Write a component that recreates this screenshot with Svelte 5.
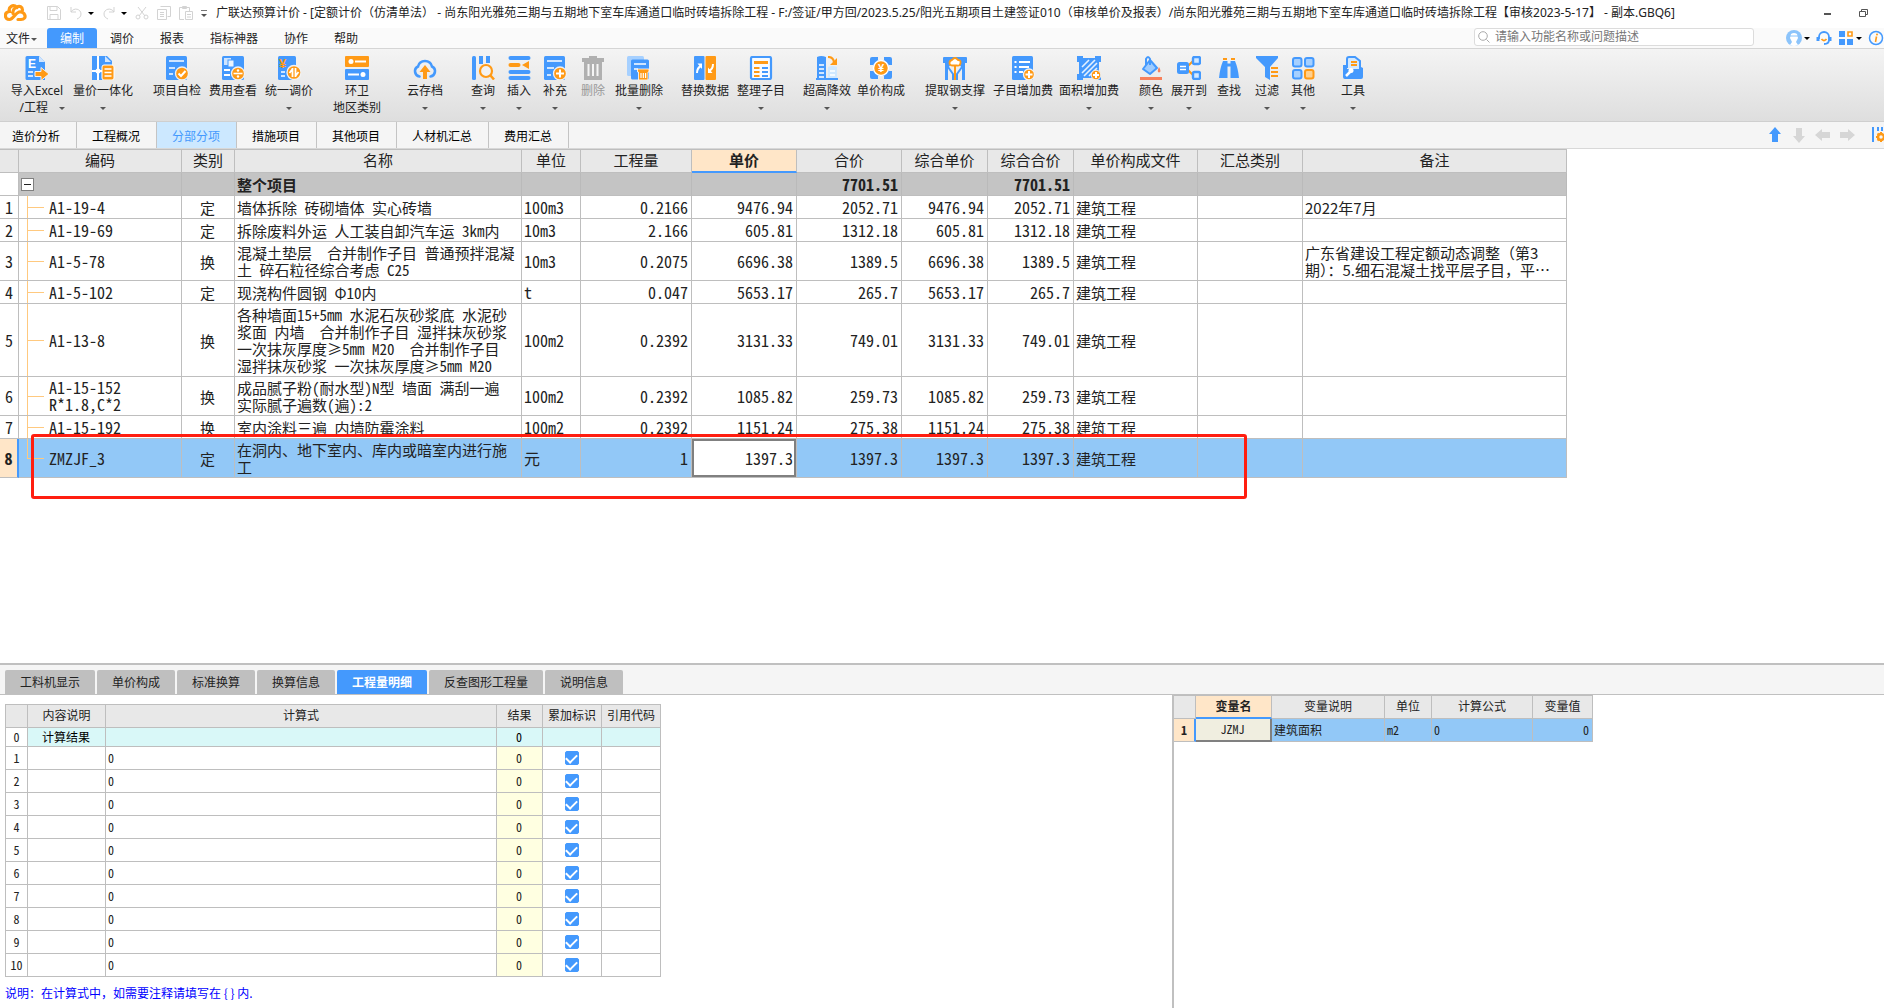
<script>
  const B = '#4499fd';
  const O = '#ff9a16';

  // 24x24 toolbar artwork
  const icons = {
    excel: `<path fill="${B}" d="M2 0h12l6 6v18H2a1.500 1.500 0 0 1-1.500-1.500v-21A1.500 1.500 0 0 1 2 0z"/><path fill="#cfe5ff" d="M14 0l6 6h-6z"/><text x="3" y="12" font-size="12" font-weight="bold" font-family="Liberation Sans" fill="#fff">E</text><path stroke="#cfe5ff" stroke-width="2" d="M3 16h5M3 20h5"/><path fill="${O}" stroke="#f2f2f2" stroke-width="1" d="M10 15.500h6V11.500l8 6.500-8 6.500v-4h-6z"/>`,
    quantity: `<path fill="${B}" d="M1 0h15l5 5v19H1z"/><path fill="#cfe5ff" d="M14 0l6 6h-6z"/><path stroke="#fff" stroke-width="2" d="M7 0v24M1 15h12"/><circle cx="7" cy="15" r="2.500" fill="#fff"/><rect x="11" y="9" width="12" height="15" rx="2" fill="${O}" stroke="#fff"/><path stroke="#fff" stroke-width="1.500" d="M13.500 13h7M13.500 16.500h7M13.500 20h7"/>`,
    check: `<rect x="1" width="21" height="24" rx="1.500" fill="${B}"/><path stroke="#cfe5ff" stroke-width="2" d="M4 5h15M4 12h6M4 18h4"/><circle cx="17" cy="17.500" r="6.500" fill="${O}" stroke="#f2f2f2" stroke-width="1.300"/><path fill="none" stroke="#fff" stroke-width="2" d="M13.500 17.500l2.500 2.500 4.500-5"/>`,
    fee: `<rect x="1" width="22" height="24" rx="1.500" fill="${B}"/><rect x="3" y="2" width="7" height="7" fill="#cfe5ff"/><rect x="7" y="4" width="6" height="7" fill="#e9f4ff" stroke="${B}"/><path stroke="#fff" stroke-width="2" d="M3 14h6M3 19h6"/><circle cx="17" cy="17.500" r="6.500" fill="${O}" stroke="#f2f2f2" stroke-width="1.300"/><path stroke="#fff" stroke-width="1.600" d="M12.500 17.500h9"/><circle cx="17" cy="14.500" r="1.200" fill="#fff"/><circle cx="17" cy="20.500" r="1.200" fill="#fff"/>`,
    adjust: `<rect x="1" width="18" height="24" rx="1.500" fill="${B}"/><text x="2" y="12" font-size="13" font-weight="bold" font-family="Liberation Sans" fill="${O}">¥</text><path stroke="#cfe5ff" stroke-width="2" d="M4 16h4M4 20h4"/><circle cx="17" cy="16.500" r="7" fill="${O}" stroke="#f2f2f2" stroke-width="1.300"/><path fill="none" stroke="#fff" stroke-width="1.800" d="M15.500 12v9M12.500 17l3-4M18.500 21v-9M21.500 16l-3 4"/>`,
    region: `<rect width="24" height="11" rx="1" fill="${O}"/><rect y="13" width="24" height="11" rx="1" fill="${B}"/><circle cx="6" cy="5.500" r="2.500" fill="#fff"/><path stroke="#fff" stroke-width="2" d="M10 5.500h11M3 18.500h11"/><circle cx="18" cy="18.500" r="2.500" fill="#fff"/>`,
    cloud: `<path fill="none" stroke="${B}" stroke-width="2.600" stroke-linecap="round" d="M6.500 20.500A5.300 5.300 0 0 1 5 10.500a7.200 7.200 0 0 1 14 0 5.300 5.300 0 0 1-1.500 10"/><path fill="${O}" d="M12 9l5.500 7H14v7h-4v-7H6.500z"/>`,
    query: `<rect x="1" width="4" height="24" rx="1.500" fill="${B}"/><path stroke="${B}" stroke-width="4" d="M10 0v8M17 0v7"/><circle cx="15" cy="15" r="6" fill="#f2f2f2" stroke="${O}" stroke-width="2.200"/><path stroke="${O}" stroke-width="2.500" d="M19.500 19.500l3.500 4"/>`,
    insert: `<g stroke-width="4" stroke-linecap="round"><path stroke="${B}" d="M3.500 2h18M3.500 16h18M3.500 22h18"/><path stroke="${O}" d="M3.500 9h8"/></g><path fill="${O}" d="M22 5v8l-7-4z"/>`,
    add: `<rect x="1" width="21" height="24" rx="1.500" fill="${B}"/><path stroke="#cfe5ff" stroke-width="1.800" d="M4 5h15M4 12h7M4 19h4"/><circle cx="17" cy="17.500" r="6.500" fill="${O}" stroke="#f2f2f2" stroke-width="1.300"/><path stroke="#fff" stroke-width="2" d="M17 13.500v8M13 17.500h8"/>`,
    trash: `<path fill="#b0b0b0" d="M8 0h8v2h7v4h-2v18H3V6H1V2h7z"/><path stroke="#f5f5f5" stroke-width="2" d="M7.500 8v12M12 8v12M16.500 8v12"/>`,
    batch: `<rect width="17" height="20" rx="1.500" fill="#a6d0ff"/><rect x="4" y="3.500" width="18" height="20" rx="1.500" fill="${B}"/><path stroke="#cfe5ff" stroke-width="1.800" d="M7 8h12M7 13h4"/><path fill="${O}" stroke="#fff" stroke-width=".8" d="M10.500 13h11.500v3h-1v8h-9.500v-8h-1z"/><path stroke="#fff" stroke-width="1.200" d="M14 17v5M16.300 17v5M18.600 17v5"/>`,
    replace: `<rect x="1" width="10.500" height="24" rx="1" fill="${B}"/><rect x="12.500" width="10.500" height="24" rx="1" fill="${O}"/><path fill="none" stroke="#fff" stroke-width="2" d="M4 17q0-5 4-7M20 8q0 5-4 7"/><path fill="#fff" d="M4.500 7.500H9V13zM19.500 17H15v-5.500z"/>`,
    arrange: `<rect x="2" y="1" width="20" height="22" rx="1.500" fill="#f8fbff" stroke="${B}" stroke-width="2.200"/><path stroke="${O}" stroke-width="3" d="M5 6.500h14"/><path stroke="${O}" stroke-width="2" d="M5 12h5.500M5 16h5.500M5 20h5.500"/><path stroke="${B}" stroke-width="2" d="M13 12h6M13 16h6M13 20h6"/>`,
    high: `<path fill="${B}" d="M2 1q4-2 9 0v21h12v2H1v-2h1z"/><path stroke="#fff" stroke-width="1.500" d="M4 9h5M4 13h5M4 17h5M4 21h5"/><path fill="#cfe8ff" d="M13 11q4-2 9 0v11h-9z"/><path stroke="#fff" stroke-width="1.300" d="M15 15h5M15 19h5"/><path fill="none" stroke="${O}" stroke-width="2.200" d="M13 1q5 0 6 5"/><path fill="${O}" d="M22 2v7h-7z"/>`,
    price: `<path fill="${B}" d="M3 1h6v3h6V1h6a2 2 0 0 1 2 2v6h-3v6h3v6a2 2 0 0 1-2 2h-6v-3H9v3H3a2 2 0 0 1-2-2v-6h3V9H1V3a2 2 0 0 1 2-2z"/><circle cx="12" cy="12" r="7.500" fill="${O}" stroke="#fff" stroke-width="1.500"/><text x="12" y="16" text-anchor="middle" font-size="11" font-weight="bold" font-family="Liberation Sans" fill="#fff">¥</text>`,
    steel: `<path fill="${B}" d="M0 2q0-1 1-1h22q1 0 1 1v5h-2v17h-3V12l-4-5H9l-4 5v12H2V7H0z"/><path fill="none" stroke="${B}" stroke-width="2" d="M5 11l5 7v6M19 11l-5 7v6"/><path stroke="${O}" stroke-width="2" d="M12 10v14"/><path fill="#fff" stroke="${O}" stroke-width="1.800" d="M9 4q3-4 6 0 3 0 2.500 3T14 9.500h-4Q6.500 9.500 6.500 7T9 4z"/>`,
    subadd: `<rect x="1" width="21" height="24" rx="1.500" fill="${B}"/><path stroke="#fff" stroke-width="2" d="M8 6h11M8 11h10M8 16h4M3.500 6h2M3.500 11h2M3.500 16h2"/><circle cx="18" cy="18.500" r="5.500" fill="${O}" stroke="#f2f2f2" stroke-width="1.300"/><path stroke="#fff" stroke-width="2" d="M18 15v7M14.500 18.500h7"/>`,
    area: `<path fill="${B}" d="M0 0h6v2h12V0h6v6h-2v12h2v6h-6v-2H6v2H0v-6h2V6H0z"/><path stroke="#e4f1ff" stroke-width="1.600" d="M5 11l7-7M5 17L18 4M7 20L20 7M12 20l8-8"/><circle cx="19" cy="19" r="4.800" fill="${O}" stroke="#f2f2f2"/><path stroke="#fff" stroke-width="2" d="M19 16v6M16 19h6"/>`,
    color: `<path fill="#9fccff" stroke="${B}" stroke-width="2" stroke-linejoin="round" d="M11 4l7 8-7 6-7-5z"/><path fill="none" stroke="${B}" stroke-width="2" d="M7 9V3q2-4 4 0v6"/><path fill="#f8805a" d="M20 11q3 5 0 5.500-2.500-.500 0-5.500zM1 21h22v3H1z"/>`,
    expand: `<path fill="none" stroke="${O}" stroke-width="2" d="M11 10l5-5M11 14l5 5"/><rect y="6" width="12" height="12" rx="2.500" fill="${B}"/><rect x="16" y="1" width="7" height="7" rx="1.500" fill="#d3e9ff" stroke="${B}" stroke-width="2.400"/><rect x="16" y="16" width="7" height="7" rx="1.500" fill="#d3e9ff" stroke="${B}" stroke-width="2.400"/><path stroke="#fff" stroke-width="1.600" d="M3 10.500h6M3 13.500h6"/>`,
    find: `<path fill="${B}" d="M6 5h4.500v17H2q1-10 4-17zM18 5h-4.500v17H22q-1-10-4-17z"/><path stroke="${B}" stroke-width="3" d="M10 9h4"/><path stroke="${O}" stroke-width="2" d="M6 3h4M14 3h4"/>`,
    filter: `<path fill="${B}" d="M1 0h22v2l-8 9v13l-5-3V11L1 2z"/><path stroke="${O}" stroke-width="1.800" d="M16 12h7M16 16h7M16 20h7"/>`,
    other: `<g fill="#a6d0ff" stroke="${B}" stroke-width="2"><rect x="2" y="2" width="8.500" height="8.500" rx="2"/><rect x="14" y="2" width="8.500" height="8.500" rx="2"/><rect x="2" y="14" width="8.500" height="8.500" rx="2"/><rect x="14" y="14" width="8.500" height="8.500" rx="2" fill="#ffd08e" stroke="${O}"/></g>`,
    tools: `<path fill="#d3e9ff" stroke="${B}" stroke-width="2" d="M6 12V3q0-2 2-2h6l5 4v8"/><path stroke="${O}" stroke-width="1.800" d="M10 6h6M10 9h6"/><path fill="${B}" d="M2 9h4v4h13l1-2 2 1v9q0 2-2 2H4q-2 0-2-2z"/><path stroke="#fff" stroke-width="2.500" d="M5 20l5-5"/><circle cx="10" cy="14.500" r="2.500" fill="#fff"/>`,
  };

  const toolGroups = [
    [
      { icon: 'excel', label: '导入Excel', sub: '/工程', caret: true, w: 64 },
      { icon: 'quantity', label: '量价一体化', caret: true, w: 68 },
    ],
    [
      { icon: 'check', label: '项目自检', w: 56 },
      { icon: 'fee', label: '费用查看', w: 56 },
      { icon: 'adjust', label: '统一调价', caret: true, w: 56 },
    ],
    [{ icon: 'region', label: '环卫', sub: '地区类别', w: 56 }],
    [{ icon: 'cloud', label: '云存档', caret: true, w: 56 }],
    [
      { icon: 'query', label: '查询', caret: true, w: 36 },
      { icon: 'insert', label: '插入', caret: true, w: 36 },
      { icon: 'add', label: '补充', caret: true, w: 36 },
      { icon: 'trash', label: '删除', off: true, w: 40 },
      { icon: 'batch', label: '批量删除', caret: true, w: 52 },
    ],
    [
      { icon: 'replace', label: '替换数据', w: 56 },
      { icon: 'arrange', label: '整理子目', caret: true, w: 56 },
    ],
    [
      { icon: 'high', label: '超高降效', caret: true, w: 52 },
      { icon: 'price', label: '单价构成', w: 56 },
    ],
    [
      { icon: 'steel', label: '提取钢支撑', caret: true, w: 68 },
      { icon: 'subadd', label: '子目增加费', w: 68 },
      { icon: 'area', label: '面积增加费', caret: true, w: 64 },
    ],
    [
      { icon: 'color', label: '颜色', caret: true, w: 36 },
      { icon: 'expand', label: '展开到', caret: true, w: 40 },
      { icon: 'find', label: '查找', w: 40 },
      { icon: 'filter', label: '过滤', caret: true, w: 36 },
      { icon: 'other', label: '其他', caret: true, w: 36 },
    ],
    [{ icon: 'tools', label: '工具', caret: true, w: 40 }],
  ];

  const menus = ['编制', '调价', '报表', '指标神器', '协作', '帮助'];
  const pages = ['造价分析', '工程概况', '分部分项', '措施项目', '其他项目', '人材机汇总', '费用汇总'];
  const detailTabs = ['工料机显示', '单价构成', '标准换算', '换算信息', '工程量明细', '反查图形工程量', '说明信息'];

  let menu = $state('编制');
  let page = $state('分部分项');
  let detail = $state('工程量明细');
  let price = $state('1397.3');

  const colWidths = [19, 163, 53, 287, 59, 111, 105, 105, 86, 86, 124, 105, 264];
  const heads = ['', '编码', '类别', '名称', '单位', '工程量', '单价', '合价', '综合单价', '综合合价', '单价构成文件', '汇总类别', '备注'];

  const rows = [
    { code: 'A1-19-4', kind: '定', name: '墙体拆除 砖砌墙体 实心砖墙', unit: '100m3', qty: '0.2166', price: '9476.94', total: '2052.71', note: '2022年7月' },
    { code: 'A1-19-69', kind: '定', name: '拆除废料外运 人工装自卸汽车运 3km内', unit: '10m3', qty: '2.166', price: '605.81', total: '1312.18' },
    { code: 'A1-5-78', kind: '换', name: '混凝土垫层  合并制作子目 普通预拌混凝\n土 碎石粒径综合考虑 C25', unit: '10m3', qty: '0.2075', price: '6696.38', total: '1389.5', note: '广东省建设工程定额动态调整（第3\n期）：5.细石混凝土找平层子目，平…' },
    { code: 'A1-5-102', kind: '定', name: '现浇构件圆钢 Φ10内', unit: 't', qty: '0.047', price: '5653.17', total: '265.7' },
    { code: 'A1-13-8', kind: '换', name: '各种墙面15+5mm 水泥石灰砂浆底 水泥砂\n浆面 内墙  合并制作子目 湿拌抹灰砂浆\n一次抹灰厚度≥5mm M20  合并制作子目\n湿拌抹灰砂浆 一次抹灰厚度≥5mm M20', unit: '100m2', qty: '0.2392', price: '3131.33', total: '749.01' },
    { code: 'A1-15-152\nR*1.8,C*2', kind: '换', name: '成品腻子粉(耐水型)N型 墙面 满刮一遍\n实际腻子遍数(遍):2', unit: '100m2', qty: '0.2392', price: '1085.82', total: '259.73' },
    { code: 'A1-15-192', kind: '换', name: '室内涂料三遍 内墙防霉涂料', unit: '100m2', qty: '0.2392', price: '1151.24', total: '275.38' },
    { code: 'ZMZJF_3', kind: '定', name: '在洞内、地下室内、库内或暗室内进行施\n工', unit: '元', qty: '1', price: '1397.3', total: '1397.3', current: true },
  ];

  let formulas = $state(Array.from({ length: 10 }, () => ({ result: '0', sum: true })));
</script>

<div class="app">
  <header class="titlebar">
    <svg class="logo" viewBox="0 0 24 18" aria-hidden="true">
      <path fill="none" stroke={O} stroke-width="3.2" stroke-linecap="round" d="M13 3.500C9-.500 4 3 5.500 7.500 0 8 0 15.500 5.500 15.500c4 0 5.500-6.500 9.500-7.500 6-1.500 9 7.500 2 7.500h-3M9 9.500C8 3 18-1 18.500 6" />
    </svg>
    <div class="quick">
      <button aria-label="保存"><svg viewBox="0 0 14 14"><path d="M.5.5h10l3 3v10H.5zM3 .500v4h7v-4M3 13.500v-5h8v5" /></svg></button>
      <button class="split" aria-label="撤销"><svg viewBox="0 0 14 14"><path d="M2 1v5h5M2 6c3-5 10-3 10 2 0 3-2 4-4 5" /></svg><i class="caret dark"></i></button>
      <button class="split" aria-label="恢复"><svg viewBox="0 0 14 14"><path d="M12 1v5H7M12 6C9 1 2 3 2 8c0 3 2 4 4 5" /></svg><i class="caret dark"></i></button>
      <button aria-label="剪切"><svg viewBox="0 0 14 14"><path d="M3 1l7 9M11 1l-7 9" /><circle cx="3" cy="11" r="2" /><circle cx="11" cy="11" r="2" /></svg></button>
      <button aria-label="复制"><svg viewBox="0 0 14 14"><path d="M3.500.5h10v10h-3M.5 3.500h9v10h-9zM3 6.500h4M3 8.500h4M3 10.500h4" /></svg></button>
      <button aria-label="粘贴"><svg viewBox="0 0 14 14"><path d="M5 13.500H.5v-12h10v4M3.500.5h4v2h-4zM6.500 5.500h7v8h-7zM8 8.500h4M8 11h4" /></svg></button>
      <button class="more" aria-label="更多"><i class="caret"></i></button>
    </div>
    <h1>广联达预算计价 - [定额计价（仿清单法） - 尚东阳光雅苑三期与五期地下室车库通道口临时砖墙拆除工程 - F:/签证/甲方回/2023.5.25/阳光五期项目土建签证010（审核单价及报表）/尚东阳光雅苑三期与五期地下室车库通道口临时砖墙拆除工程【审核2023-5-17】 - 副本.GBQ6]</h1>
    <div class="window">
      <button aria-label="最小化"><svg viewBox="0 0 10 10"><path stroke-width="2" d="M1 6h7" /></svg></button>
      <button aria-label="还原"><svg viewBox="0 0 10 10"><path d="M2.500 3V1.500h6v5H7M.5 3.500H6.500v5h-6z" /></svg></button>
    </div>
  </header>

  <nav class="menubar">
    <button class="file">文件<i class="caret"></i></button>
    {#each menus as item}
      <button class:on={menu === item} onclick={() => (menu = item)}>{item}</button>
    {/each}
    <label class="search">
      <svg viewBox="0 0 12 12" aria-hidden="true"><circle cx="5" cy="5" r="4.300" /><path d="M8.500 8.500l3 3" /></svg>
      <input type="text" placeholder="请输入功能名称或问题描述" aria-label="搜索" />
    </label>
    <div class="account">
      <button class="split" aria-label="账户">
        <svg viewBox="0 0 16 16"><circle cx="8" cy="8" r="8" fill="#8cc4fb" /><path fill="#fff" d="M5 4q3-2 6 0l1 4-2 4 2 3q-4 2-8 0l2-3-2-4z" /><path stroke="#8cc4fb" d="M3 6h10" /></svg>
        <i class="caret dark"></i>
      </button>
      <button aria-label="客服">
        <svg viewBox="0 0 16 16"><path fill="none" stroke={B} stroke-width="1.800" d="M3 9V7a5 5 0 0 1 10 0v3q0 4-5 4" /><path stroke={B} stroke-width="3" d="M2 7v4M14 7v4" /><path fill="none" stroke={O} stroke-width="1.800" d="M5.500 9q2.500 3 5 0" /></svg>
      </button>
      <button class="split" aria-label="应用">
        <svg viewBox="0 0 16 16"><path fill={B} d="M1 1h6v6H1zM1 9h6v6H1zM9 9h6v6H9z" /><path fill="none" stroke={O} stroke-width="1.600" d="M10 2h4v4h-4z" /></svg>
        <i class="caret dark"></i>
      </button>
      <button aria-label="关于">
        <svg viewBox="0 0 16 16"><circle cx="8" cy="8" r="6.500" fill="none" stroke={B} stroke-width="1.500" /><circle cx="9" cy="4.500" r="1" fill={O} /><path stroke={O} stroke-width="1.600" d="M8.500 6.500l-1 5.500" /></svg>
      </button>
    </div>
  </nav>

  <div class="toolbar">
    {#each toolGroups as group}
      <div class="group">
        {#each group as tool}
          <button class="tool" disabled={tool.off} style:width="{tool.w}px">
            <svg viewBox="0 0 24 24" aria-hidden="true">{@html icons[tool.icon]}</svg>
            <span>{tool.label}</span>
            <span class="sub" class:wide={tool.sub && tool.caret}>{tool.sub ?? ''}{#if tool.caret}<i class="caret"></i>{/if}</span>
          </button>
        {/each}
      </div>
    {/each}
  </div>

  <nav class="pages">
    {#each pages as item}
      <button class:on={page === item} onclick={() => (page = item)}>{item}</button>
    {/each}
    <div class="moves">
      <button class="live" aria-label="上移"><svg viewBox="0 0 16 16"><path d="M8 0l6 7h-3v8H5V7H2z" /></svg></button>
      <button aria-label="下移"><svg viewBox="0 0 16 16"><path d="M8 16l6-7h-3V1H5v8H2z" /></svg></button>
      <button aria-label="左移"><svg viewBox="0 0 16 16"><path d="M0 8l7-6v3h8v6H7v3z" /></svg></button>
      <button aria-label="右移"><svg viewBox="0 0 16 16"><path d="M16 8L9 2v3H1v6h8v3z" /></svg></button>
    </div>
    <button class="setup" aria-label="列设置">
      <svg viewBox="0 0 12 16"><path stroke={B} stroke-width="2" d="M1 0v15M6 0v4M10 0v4" /><circle cx="9" cy="10" r="3" fill="none" stroke={O} stroke-width="2.500" /><path stroke={O} stroke-width="2" d="M9 5v2M9 13v2M4 10h2M5.500 6.500L7 8M5.500 13.500L7 12" /></svg>
    </button>
  </nav>

  <main>
    <table class="grid bill">
      <colgroup>
        {#each colWidths as w}<col style:width="{w}px" />{/each}
      </colgroup>
      <thead>
        <tr>
          {#each heads as head}
            <th class:picked={head === '单价'}>{head}</th>
          {/each}
        </tr>
      </thead>
      <tbody>
        <tr class="project">
          <td class="no"></td>
          <td class="root"><button class="fold" aria-label="折叠"></button></td>
          <td></td>
          <td>整个项目</td>
          <td></td>
          <td></td>
          <td></td>
          <td class="num">7701.51</td>
          <td></td>
          <td class="num">7701.51</td>
          <td></td>
          <td></td>
          <td></td>
        </tr>
        {#each rows as row, i}
          <tr class:current={row.current}>
            <td class="no">{i + 1}</td>
            <td class="code">{row.code}</td>
            <td class="mid">{row.kind}</td>
            <td>{row.name}</td>
            <td class="unit">{row.unit}</td>
            <td class="num">{row.qty}</td>
            {#if row.current}
              <td class="edit"><input type="text" aria-label="单价" bind:value={price} /></td>
            {:else}
              <td class="num">{row.price}</td>
            {/if}
            <td class="num">{row.total}</td>
            <td class="num">{row.price}</td>
            <td class="num">{row.total}</td>
            <td>建筑工程</td>
            <td></td>
            <td class="note">{row.note ?? ''}</td>
          </tr>
        {/each}
      </tbody>
    </table>
    <div class="mark"></div>
  </main>

  <section class="details">
    <nav class="tabs">
      {#each detailTabs as item}
        <button class:on={detail === item} onclick={() => (detail = item)}>{item}</button>
      {/each}
    </nav>
    <div class="panes">
      <div class="left">
        <table class="grid small formula">
          <colgroup>
            <col class="c-no" /><col class="c-desc" /><col class="c-expr" /><col class="c-result" /><col class="c-flag" /><col class="c-flag" />
          </colgroup>
          <thead>
            <tr><th></th><th>内容说明</th><th>计算式</th><th>结果</th><th>累加标识</th><th>引用代码</th></tr>
          </thead>
          <tbody>
            <tr class="sum">
              <td class="no">0</td>
              <td class="mid">计算结果</td>
              <td></td>
              <td class="mid">0</td>
              <td></td>
              <td></td>
            </tr>
            {#each formulas as line, i}
              <tr>
                <td class="no">{i + 1}</td>
                <td></td>
                <td>0</td>
                <td class="mid result">{line.result}</td>
                <td class="mid"><input type="checkbox" aria-label="累加标识 {i + 1}" bind:checked={line.sum} /></td>
                <td></td>
              </tr>
            {/each}
          </tbody>
        </table>
        <p>说明：在计算式中，如需要注释请填写在 &#123; &#125; 内.</p>
      </div>
      <div class="right">
        <table class="grid small vars">
          <colgroup>
            <col class="v-no" /><col class="v-name" /><col class="v-desc" /><col class="v-unit" /><col class="v-expr" /><col class="v-value" />
          </colgroup>
          <thead>
            <tr><th></th><th class="picked">变量名</th><th>变量说明</th><th>单位</th><th>计算公式</th><th>变量值</th></tr>
          </thead>
          <tbody>
            <tr class="current">
              <td class="no">1</td>
              <td class="mid name">JZMJ</td>
              <td>建筑面积</td>
              <td>m2</td>
              <td>0</td>
              <td class="num">0</td>
            </tr>
          </tbody>
        </table>
      </div>
    </div>
  </section>
</div>

<style>
:global(body) {
  margin: 0;
}

.app {
  display: flex;
  flex-direction: column;
  height: 100vh;
  overflow: hidden;
  background: #fff;
  color: #222;
  font: 12px/18px "Noto Sans", "Noto Sans CJK SC", sans-serif;
}

.app * {
  box-sizing: border-box;
}

button {
  padding: 0;
  border: 0;
  background: none;
  color: inherit;
  font: inherit;
  white-space: nowrap;
}

svg {
  display: block;
  flex: none;
}

.caret {
  display: block;
  width: 0;
  height: 0;
  border: 3px solid transparent;
  border-top-color: #555;
  border-bottom: 0;
}
.caret.dark {
  border-top-color: #000;
}

.split {
  display: flex;
  align-items: center;
  gap: 5px;
}

/* title */
.titlebar {
  display: flex;
  align-items: center;
  height: 28px;
  padding: 0 15px 2px 4px;
  background: #fff;
}
.logo {
  width: 24px;
  height: 18px;
}
.quick {
  display: flex;
  align-items: center;
  gap: 8px;
  margin: 0 9px 0 19px;
}
.quick svg {
  width: 14px;
  height: 14px;
  fill: none;
  stroke: #d3d3d3;
}
.quick .more {
  padding-top: 3px;
  border-top: 1px solid #777;
}
h1 {
  flex: 1;
  margin: 0;
  font-size: 12px;
  font-weight: normal;
  line-height: 26px;
  white-space: nowrap;
}
.window {
  display: flex;
  gap: 26px;
}
.window svg {
  width: 10px;
  height: 10px;
  fill: none;
  stroke: #555;
}

/* menu */
.menubar {
  display: flex;
  align-items: stretch;
  height: 21px;
  border-bottom: 1px solid #d5d5d5;
  background: #fafafa;
}
.menubar > button {
  padding: 2px 13px 0;
}
.menubar > .file {
  display: flex;
  align-items: center;
  gap: 1px;
  padding: 2px 10px 0 6px;
}
.menubar .on {
  border-radius: 3px 3px 0 0;
  background: #4499fd;
  color: #fff;
}
.search {
  display: flex;
  align-items: center;
  gap: 5px;
  width: 280px;
  height: 18px;
  margin-left: auto;
  padding: 0 3px;
  border: 1px solid #dcdcdc;
  border-radius: 3px;
  background: #fff;
}
.search svg {
  width: 12px;
  height: 12px;
  fill: none;
  stroke: #aaa;
}
.search input {
  flex: 1;
  min-width: 0;
  padding: 0;
  border: 0;
  outline: 0;
  background: none;
  font: inherit;
}
.search input::placeholder {
  color: #777;
}
.account {
  display: flex;
  align-items: center;
  gap: 6px;
  margin-left: 32px;
}
.account .split {
  gap: 2px;
}
.account svg {
  width: 16px;
  height: 16px;
}

/* toolbar */
.toolbar {
  display: flex;
  gap: 12px;
  height: 73px;
  padding: 7px 5px 0;
  border-bottom: 1px solid #cfcfcf;
  background: linear-gradient(#f4f4f4, #dedede);
}
.group {
  display: flex;
  align-items: flex-start;
}
.tool {
  display: flex;
  flex-direction: column;
  align-items: center;
}
.tool:disabled {
  color: #999;
}
.tool svg {
  width: 24px;
  height: 24px;
  margin-bottom: 2px;
}
.sub {
  display: flex;
  align-items: center;
  justify-content: center;
  height: 16px;
}
.sub.wide {
  align-self: flex-end;
  gap: 11px;
  padding-right: 4px;
}

/* page tabs */
.pages {
  display: flex;
  height: 27px;
  border-bottom: 1px solid #d8d8d8;
  background: #f5f5f5;
  color: #000;
}
.pages > button {
  padding: 3px 16px 0 15px;
  border-right: 1px solid #c4c4c4;
}
.pages > button:first-child {
  padding-left: 12px;
}
.pages .on {
  background: #cce8ff;
  color: #4499fd;
}
.moves {
  display: flex;
  align-items: center;
  gap: 8px;
  margin-left: auto;
}
.moves svg {
  width: 16px;
  height: 16px;
  fill: #d6d6d6;
}
.moves .live svg {
  fill: #4499fd;
}
.pages > .setup {
  padding: 0;
  margin-left: 17px;
  border: 0;
}
.setup svg {
  width: 12px;
  height: 16px;
}

/* grids */
main {
  position: relative;
  flex: 1;
  min-height: 0;
}
.grid {
  table-layout: fixed;
  border-collapse: separate;
  border-spacing: 0;
  border-top: 1px solid #bebebe;
  font-family: "Noto Sans CJK SC", sans-serif;
  font-feature-settings: "hwid" 1;
}
.bill {
  width: 1567px;
  font-size: 15px;
  line-height: 17px;
}
.grid th,
.grid td {
  height: 23px;
  padding: 2px 3px 2px 2px;
  border: solid #bebebe;
  border-width: 0 1px 1px 0;
  text-align: left;
  white-space: pre;
}
.grid th {
  padding: 0 0 3px;
  background: #e8e8e8;
  font-weight: normal;
  text-align: center;
}
.grid .picked {
  padding-bottom: 2px;
  border-bottom: 2px solid #4499fd;
  background: #ffe6c8;
  font-weight: bold;
}
.grid .num {
  text-align: right;
}
.grid .mid {
  text-align: center;
}
.grid .no {
  padding: 2px 0;
  text-align: center;
}
.grid .note {
  font-feature-settings: normal;
}
.bill .num,
.bill .code,
.bill .unit,
.bill .no {
  font-size: 16px;
}
.project td:not(.no) {
  border-right-color: #bababa;
  background: #c4c4c4;
  font-weight: bold;
}
.bill .root {
  padding: 0 2px;
}
.fold {
  display: block;
  width: 13px;
  height: 13px;
  border: 1px solid #808080;
  background: linear-gradient(#222, #222) center / 7px 1px no-repeat #fff;
}
/* tree guides are painted behind the code text */
.bill .code {
  padding-left: 30px;
  background:
    linear-gradient(#ffc97f, #ffc97f) 8px 0 / 1px 100% no-repeat,
    linear-gradient(#ffc97f, #ffc97f) 8px 50% / 17px 1px no-repeat;
}
.current td {
  background: #92c8f7;
}
.bill .current .code {
  background:
    linear-gradient(#ffc97f, #ffc97f) 8px 0 / 1px 50% no-repeat,
    linear-gradient(#ffc97f, #ffc97f) 8px 50% / 17px 1px no-repeat,
    #92c8f7;
}
.grid .current .no {
  border-right: 2px solid #4499fd;
  background: #ffe6c8;
  font-weight: bold;
}
.grid .edit {
  padding: 0;
}
.edit input {
  display: block;
  width: 100%;
  height: 38px;
  padding: 0 1px;
  border: 2px solid #808080;
  border-radius: 0;
  outline: 0;
  background: #fff;
  color: inherit;
  font: inherit;
  font-size: 16px;
  font-feature-settings: inherit;
  text-align: right;
}
.mark {
  position: absolute;
  top: 285px;
  left: 31px;
  width: 1216px;
  height: 65px;
  border: 3px solid #ff1e10;
  border-radius: 3px;
}

/* lower panel */
.details {
  display: flex;
  flex-direction: column;
  height: 345px;
  border-top: 2px solid #c0c0c0;
}
.tabs {
  display: flex;
  gap: 2px;
  padding: 5px 5px 0;
  border-bottom: 1px solid #c0c0c0;
  background: #f5f5f5;
}
.tabs button {
  height: 24px;
  padding: 1px 15px 0;
  border-radius: 2px 2px 0 0;
  background: #bfbfbf;
}
.tabs .on {
  background: #4499fd;
  color: #fff;
  font-weight: bold;
}
.panes {
  display: flex;
  flex: 1;
  min-height: 0;
}
.left {
  flex: 1;
  padding: 9px 5px 0;
}
.right {
  width: 712px;
  border-left: 2px solid #c0c0c0;
}
.small {
  font-size: 12px;
  line-height: 14px;
}
.grid.small td {
  padding-top: 1px;
}
.formula {
  width: 656px;
  border-left: 1px solid #bebebe;
}
.grid.formula .sum td {
  height: 19px;
}
.formula .sum td:not(.no) {
  background: #d9f8f8;
  color: #000;
}
.formula .result {
  background: #ffffe1;
}
.c-no { width: 22px; }
.c-desc { width: 78px; }
.c-expr { width: 391px; }
.c-result { width: 46px; }
.c-flag { width: 59px; }
.vars {
  width: 419px;
}
.v-no { width: 22px; }
.v-name { width: 76px; }
.v-desc { width: 113px; }
.v-unit { width: 47px; }
.v-expr { width: 101px; }
.v-value { width: 60px; }
.vars .name {
  border-right: 2px solid #808080;
  border-bottom: 2px solid #808080;
  background: #f0eee0;
}
input[type="checkbox"] {
  display: block;
  width: 14px;
  height: 14px;
  margin: 0 auto;
  appearance: none;
  border: 1px solid #4499fd;
  border-radius: 2px;
}
input[type="checkbox"]:checked {
  background: #4499fd;
}
input[type="checkbox"]:checked::after {
  content: "";
  display: block;
  width: 5px;
  height: 9px;
  margin: 0 auto;
  border: solid #fff;
  border-width: 0 2px 2px 0;
  rotate: 45deg;
}
p {
  margin: 7px 0 0;
  color: #0000ff;
  font-family: "Noto Sans CJK SC", sans-serif;
}
</style>
